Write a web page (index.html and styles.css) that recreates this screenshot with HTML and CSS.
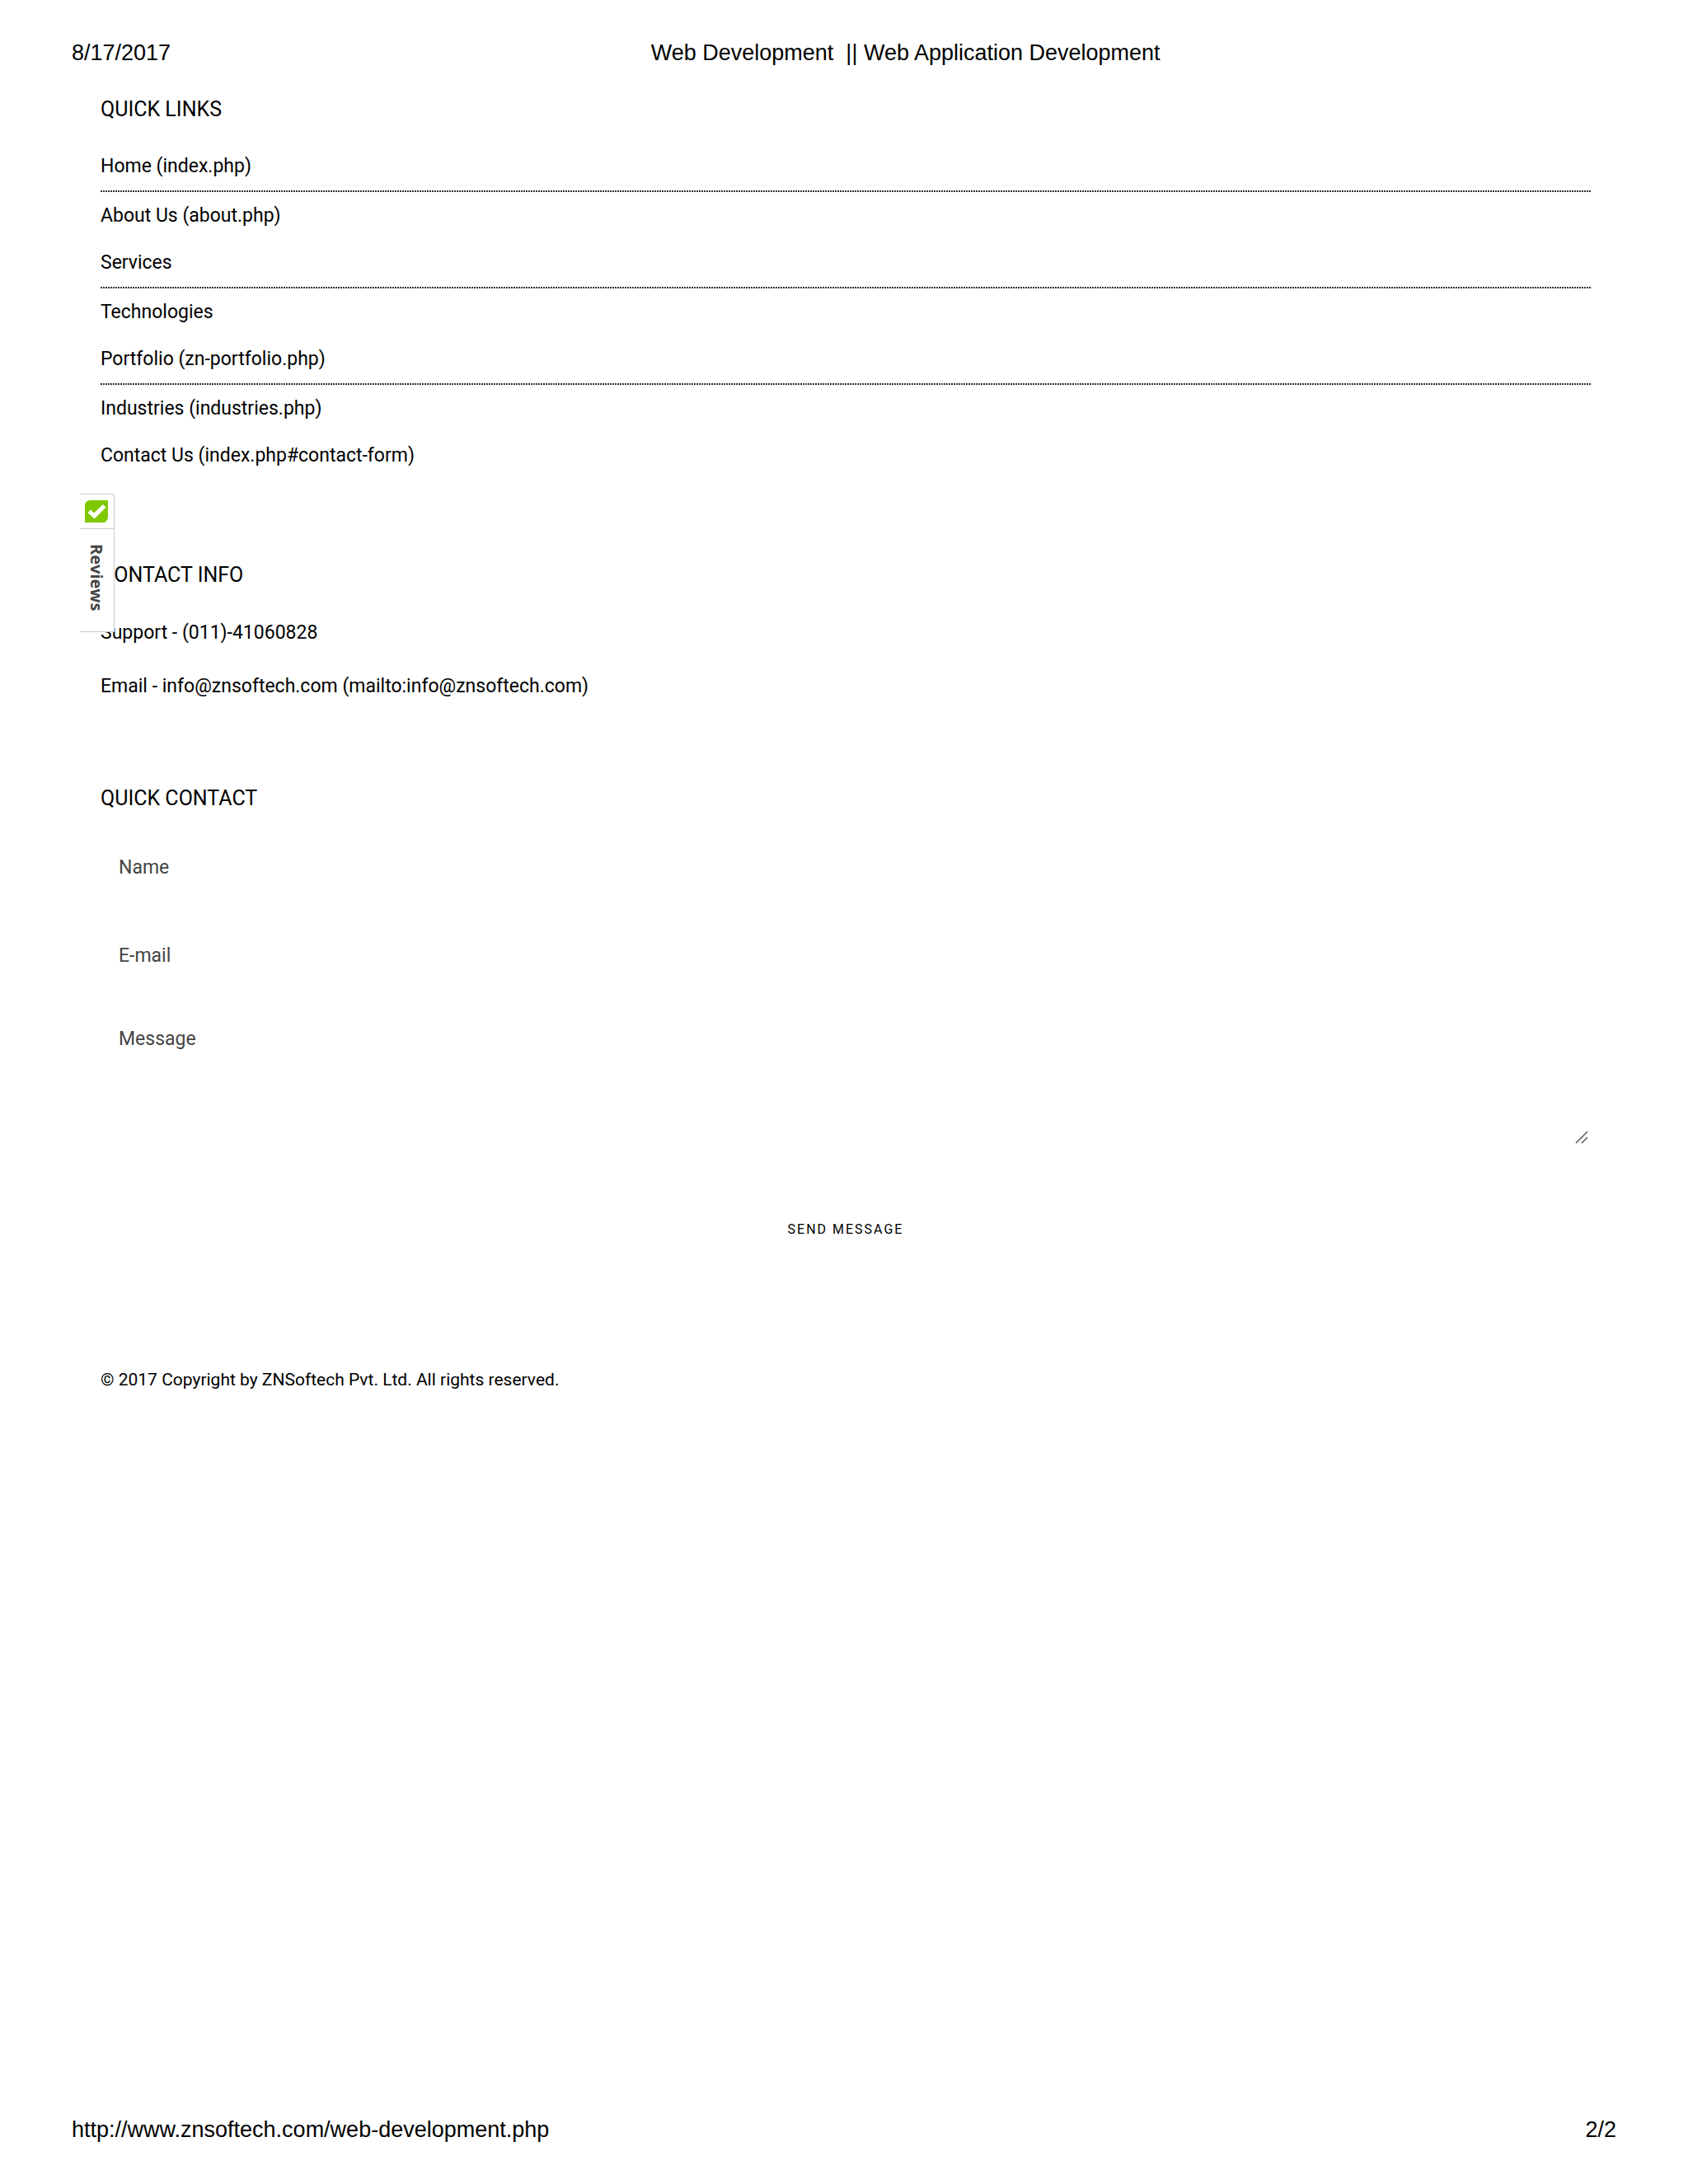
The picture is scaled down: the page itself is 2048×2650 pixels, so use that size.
FILE: index.html
```html
<!DOCTYPE html>
<html lang="en">
<head>
  <meta charset="UTF-8" />
  <meta name="viewport" content="width=device-width, initial-scale=1.0"/>
  <title>Web Development || Web Application Development</title>
  <link rel="stylesheet" href="styles.css">
</head>
<body>

  <header class="page-bar page-header">
    <span>8/17/2017</span>
    <span>Web Development &nbsp;|| Web Application Development</span>
  </header>

  <main class="content">
    <section class="quick-links">
      <h2>QUICK LINKS</h2>
      <ul>
        <li><a href="index.php">Home (index.php)</a></li>
        <li><a href="about.php">About Us (about.php)</a></li>
        <li><a href="#">Services</a></li>
        <li><a href="#">Technologies</a></li>
        <li><a href="zn-portfolio.php">Portfolio (zn-portfolio.php)</a></li>
        <li><a href="industries.php">Industries (industries.php)</a></li>
        <li><a href="index.php#contact-form">Contact Us (index.php#contact-form)</a></li>
      </ul>
    </section>

    <section class="contact-info">
      <h2>CONTACT INFO</h2>
      <p>Support - (011)-41060828</p>
      <p>Email - <a href="mailto:info@znsoftech.com">info@znsoftech.com (mailto:info@znsoftech.com)</a></p>

      <!-- Reviews tab, sits over the left edge -->
      <a href="#" class="reviews-tab">
        <span class="reviews-icon">
          <svg width="28" height="28" viewBox="0 0 28 28" aria-hidden="true">
            <path d="M6 0H28V20Q28 24 24 27H0V6Q0 1 6 0Z" fill="#80c800"/>
            <path d="M3.5 15L7 11.5L11 15.5L22 5L25.5 8.5L11.5 22.5Z" fill="#fff"/>
          </svg>
        </span>
        <span class="reviews-label">Reviews</span>
      </a>
    </section>

    <section class="quick-contact">
      <h2>QUICK CONTACT</h2>
      <form>
        <input type="text" name="name" placeholder="Name" aria-label="Name">
        <input type="email" name="email" placeholder="E-mail" aria-label="E-mail">
        <div class="message-field">
          <textarea name="message" placeholder="Message" aria-label="Message"></textarea>
          <svg class="grip" width="16" height="16" viewBox="0 0 16 16" aria-hidden="true">
            <path d="M1 15L15 1M8 15L15 8" fill="none" stroke="#555" stroke-width="1.5"/>
          </svg>
        </div>
        <button type="submit">SEND MESSAGE</button>
      </form>
    </section>

    <p class="copyright">&copy; 2017 Copyright by ZNSoftech Pvt. Ltd. All rights reserved.</p>
  </main>

  <footer class="page-bar page-footer">
    <span>http://www.znsoftech.com/web-development.php</span>
    <span>2/2</span>
  </footer>

</body>
</html>
```

FILE: styles.css
```css
* {
  margin: 0;
  padding: 0;
  box-sizing: border-box;
}

body {
  display: flex;
  flex-direction: column;
  min-height: 100vh;
  background: #fff;
  color: #000;
  font-family: Roboto, sans-serif;
  font-size: 23px;
}

a {
  color: inherit;
  text-decoration: none;
}

.page-bar {
  padding: 0 87px;
  font-family: "Liberation Sans", Arial, sans-serif;
  font-size: 27px;
  line-height: 32px;
}

.page-header {
  display: grid;
  grid-template-columns: 3fr 5fr;
  padding-top: 48px;
}

.page-footer {
  display: flex;
  justify-content: space-between;
  margin-top: auto;
  padding-bottom: 50px;
}

.content {
  padding: 38px 118px 0 122px;
}

h2 {
  font-size: 25px;
  font-weight: 400;
  line-height: 30px;
}

.quick-links ul {
  list-style: none;
  margin-top: 25px;
}

.quick-links li {
  line-height: 57px;
}

.quick-links li:nth-child(odd) {
  line-height: 58px;
}

/* fine dotted rule under every second link */
.quick-links li:nth-child(odd):not(:last-child)::after {
  content: "";
  display: block;
  height: 2px;
  background: repeating-linear-gradient(to right, #333 0 2px, #fff 2px 3px);
}

.contact-info {
  position: relative;
  margin-top: 101px;
}

.contact-info p {
  margin-top: 36px;
  line-height: 29px;
}

.contact-info h2 + p {
  margin-top: 40px;
}

.reviews-tab {
  position: absolute;
  top: -84px;
  left: -25px;
  width: 42px;
  height: 168px;
  background: #fff;
  border: 1px solid #ccc;
  border-left: 0;
  border-radius: 0 3px 0 0;
}

.reviews-icon {
  display: block;
  height: 42px;
  padding: 7px 6px;
  border-bottom: 1px solid #ccc;
}

.reviews-icon svg {
  display: block;
}

.reviews-label {
  display: block;
  padding: 18px 6px 0;
  writing-mode: vertical-rl;
  font-family: "Open Sans", sans-serif;
  font-size: 20px;
  font-weight: 700;
  line-height: 28px;
  color: #444;
}

.quick-contact {
  margin-top: 107px;
}

.quick-contact form {
  display: flex;
  flex-direction: column;
  margin-top: 36px;
}

input,
textarea {
  width: 100%;
  border: 0;
  background: transparent;
  color: #444;
  font-family: inherit;
  font-size: 23px;
}

input {
  height: 64px;
  margin-bottom: 43px;
  padding: 0 22px;
}

.message-field {
  position: relative;
}

textarea {
  display: block;
  height: 157px;
  padding: 12px 22px 0;
  line-height: 29px;
  resize: none;
}

/* corner grip drawn over the textarea */
.grip {
  position: absolute;
  right: 3px;
  bottom: 3px;
}

::placeholder {
  color: #444;
  opacity: 1;
}

button {
  align-self: center;
  margin-top: 73px;
  padding: 16px 24px;
  border: 0;
  background: transparent;
  color: #000;
  font-family: inherit;
  font-size: 16px;
  line-height: 24px;
  letter-spacing: 2px;
}

.copyright {
  margin-top: 141px;
  font-size: 21px;
  line-height: 26px;
}
```
